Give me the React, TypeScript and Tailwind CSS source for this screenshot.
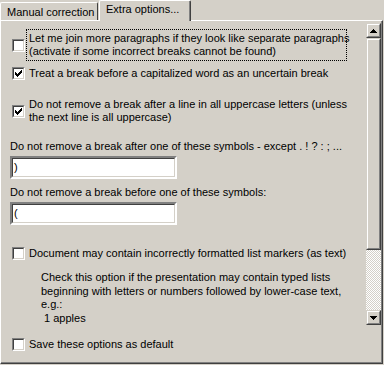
import React from "react";

function CheckMark() {
  const cols = [2, 3, 4, 3, 2, 1, 0];
  return (
    <svg width="7" height="7" viewBox="0 0 7 7" shapeRendering="crispEdges" className="absolute left-[1px] top-[1px]">
      {cols.map((y, x) => (
        <rect key={x} x={x} y={y} width="1" height="3" fill="#000" />
      ))}
    </svg>
  );
}

function Box({ checked }: { checked?: boolean }) {
  return (
    <div className="w-[13px] h-[13px] shrink-0 border border-t-[#808080] border-l-[#808080] border-b-white border-r-white">
      <div className="relative w-full h-full border border-t-[#404040] border-l-[#404040] border-b-[#d4d0c8] border-r-[#d4d0c8] bg-white">
        {checked && <CheckMark />}
      </div>
    </div>
  );
}

function Option({
  checked,
  focus,
  lines,
  className,
}: {
  checked?: boolean;
  focus?: boolean;
  lines: string[];
  className?: string;
}) {
  return (
    <div className={"flex items-center pl-[11px] " + (className ?? "")}>
      <Box checked={checked} />
      <div
        className={
          "ml-[1px] px-[2px] py-[2px] border leading-[13px] " +
          (focus ? "border-dotted border-black w-[321px]" : "border-transparent")
        }
      >
        {lines.map((l, i) => (
          <div key={i} className="whitespace-nowrap">
            {l}
          </div>
        ))}
      </div>
    </div>
  );
}

function Field({ value, className }: { value: string; className?: string }) {
  return (
    <div className={"ml-[9px] w-[167px] h-[23px] border-2 border-t-[#808080] border-l-[#808080] border-b-white border-r-white " + (className ?? "")}>
      <div className="w-full h-full border border-t-[#404040] border-l-[#404040] border-b-[#d4d0c8] border-r-[#d4d0c8] bg-white flex items-center pl-[1px] leading-[13px]">
        {value}
      </div>
    </div>
  );
}

function Arrow({ up }: { up?: boolean }) {
  return (
    <div className="w-[15px] h-[15px] shrink-0 border border-t-[#d4d0c8] border-l-[#d4d0c8] border-b-[#404040] border-r-[#404040]">
      <div className="w-full h-full border border-t-white border-l-white border-b-[#808080] border-r-[#808080] bg-[#d4d0c8] flex items-center justify-center">
        <svg width="7" height="4" viewBox="0 0 7 4" shapeRendering="crispEdges">
          {up ? (
            <path d="M3 0h1v1h1v1h1v1h1v1H0V3h1V2h1V1h1z" fill="#000" />
          ) : (
            <path d="M0 0h7v1H6v1H5v1H4v1H3V3H2V2H1V1H0z" fill="#000" />
          )}
        </svg>
      </div>
    </div>
  );
}

export default function App() {
  return (
    <div className="w-[384px] h-[365px] bg-[#d4d0c8] text-[11px] text-black font-['Liberation_Sans',Arial,sans-serif] overflow-hidden">
      {/* tabs */}
      <div className="flex h-[20px] items-end relative z-10">
        <div className="w-[98px] h-[18px] border-t border-l border-white border-r border-r-[#404040] rounded-tl-[2px] rounded-tr-[2px] pl-[6px] flex items-center pt-[1px] leading-[13px]">
          Manual correction
        </div>
        <div className="ml-[1px] w-[92px] h-[21px] -mb-[1px] bg-[#d4d0c8] border-t border-l border-white border-r border-r-[#404040] rounded-tl-[2px] rounded-tr-[2px]">
          <div className="h-full border-r border-[#808080] pl-[6px] pb-[3px] flex items-center leading-[13px]">
            Extra options...
          </div>
        </div>
      </div>
      {/* panel */}
      <div className="w-[383px] h-[344px] border-t border-l border-white border-r border-b border-r-[#404040] border-b-[#404040]">
        <div className="w-full h-full border-r border-b border-[#808080] flex flex-col">
          <div className="flex mt-[1px] h-[304px]">
            <div className="flex-1 h-full overflow-hidden">
              <Option focus lines={["Let me join more paragraphs if they look like separate paragraphs", "(activate if some incorrect breaks cannot be found)"]} className="mt-[7px]" />
              <Option checked lines={["Treat a break before a capitalized word as an uncertain break"]} className="mt-[3px]" />
              <Option checked lines={["Do not remove a break after a line in all uppercase letters (unless", "the next line is all uppercase)"]} className="mt-[12px]" />
              <div className="pl-[9px] mt-[13px] leading-[13px] whitespace-nowrap">
                Do not remove a break after one of these symbols - except . ! ? : ; ...
              </div>
              <Field value=")" className="mt-[3px]" />
              <div className="pl-[9px] mt-[7px] leading-[13px] whitespace-nowrap">
                Do not remove a break before one of these symbols:
              </div>
              <Field value="(" className="mt-[3px]" />
              <Option lines={["Document may contain incorrectly formatted list markers (as text)"]} className="mt-[19px]" />
              <div className="pl-[40px] mt-[8px] leading-[13.5px] whitespace-nowrap">
                <div>Check this option if the presentation may contain typed lists</div>
                <div>beginning with letters or numbers followed by lower-case text,</div>
                <div>e.g.:</div>
                <div>&nbsp;1 apples</div>
                <div>&nbsp;2 pears</div>
              </div>
            </div>
            <div className="w-[15px] h-full py-[1px] flex flex-col">
              <Arrow up />
              <div className="h-[212px] shrink-0 border border-t-[#d4d0c8] border-l-[#d4d0c8] border-b-[#404040] border-r-[#404040]">
                <div className="w-full h-full border border-t-white border-l-white border-b-[#808080] border-r-[#808080] bg-[#d4d0c8]" />
              </div>
              <div className="flex-1 bg-[repeating-conic-gradient(#ffffff_0_25%,#d4d0c8_0_50%)] bg-[length:2px_2px]" />
              <Arrow />
            </div>
          </div>
          <Option lines={["Save these options as default"]} className="mt-[9px]" />
        </div>
      </div>
    </div>
  );
}
